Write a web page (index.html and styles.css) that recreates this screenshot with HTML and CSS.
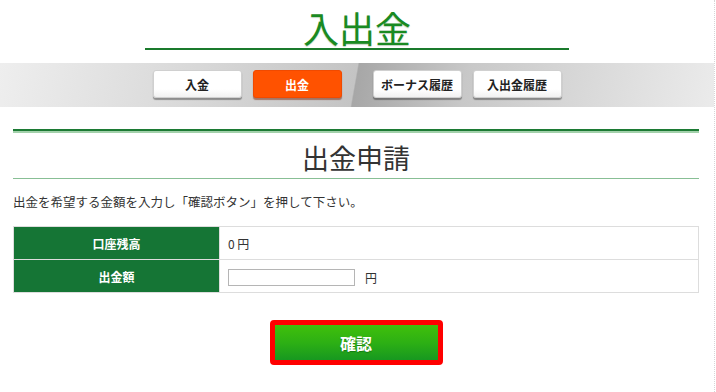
FILE: index.html
```html
<!DOCTYPE html>
<html lang="ja">
<head>
    <meta charset="UTF-8">
    <meta name="viewport" content="width=device-width, initial-scale=1.0">
    <title>入出金</title>
    <link rel="stylesheet" href="styles.css">
</head>
<body>
    <div class="page">
        <header class="page-head">
            <h1>入出金</h1>
        </header>

        <nav class="tab-band">
            <div class="tab-group">
                <a href="#" class="tab">入金</a>
                <a href="#" class="tab active">出金</a>
            </div>
            <div class="tab-group">
                <a href="#" class="tab">ボーナス履歴</a>
                <a href="#" class="tab">入出金履歴</a>
            </div>
        </nav>

        <section class="panel">
            <div class="double-rule"></div>
            <h2>出金申請</h2>
            <p class="lead">出金を希望する金額を入力し「確認ボタン」を押して下さい。</p>

            <table class="form-table">
                <tr>
                    <th>口座残高</th>
                    <td>0&nbsp;円</td>
                </tr>
                <tr>
                    <th>出金額</th>
                    <td><input type="text" class="amount-input"><span class="unit">円</span></td>
                </tr>
            </table>

            <div class="actions">
                <button class="confirm-btn">確認</button>
            </div>
        </section>
    </div>
</body>
</html>
```

FILE: styles.css
```css
* {
    margin: 0;
    padding: 0;
    box-sizing: border-box;
}

body {
    font-family: "Noto Sans CJK JP", "Noto Sans", sans-serif;
    background: #ffffff;
    color: #333333;
}

.page {
    width: 715px;
    min-height: 392px;
    border-right: 1px dotted #d6d6d6;
}

/* page title */
.page-head {
    padding-top: 6px;
}

.page-head h1 {
    width: 424px;
    margin: 0 auto;
    font-size: 36px;
    line-height: 42px;
    font-weight: 400;
    text-align: center;
    color: #198a22;
    border-bottom: 2px solid #1a7a2c;
    text-shadow: 0 1px 1px rgba(0, 80, 0, 0.25);
}

/* tabs */
.tab-band {
    margin-top: 13px;
    height: 44px;
    display: flex;
    justify-content: center;
    align-items: flex-start;
    gap: 31px;
    padding-top: 7px;
    background: linear-gradient(100deg, #eeeeee 0%, #d6d6d6 30%, #c4c4c4 49.6%, #a7a7a7 49.8%, #c8c8c8 65%, #ebebeb 100%);
}

.tab-group {
    display: flex;
    gap: 11px;
}

.tab {
    display: flex;
    align-items: center;
    justify-content: center;
    width: 89px;
    height: 28px;
    background: linear-gradient(#ffffff 0%, #ffffff 70%, #f1f1f1 100%);
    border: 1px solid #d0d0d0;
    border-radius: 3px;
    box-shadow: 0 2px 1px rgba(0, 0, 0, 0.35);
    color: #222222;
    font-size: 12px;
    font-weight: 700;
    text-decoration: none;
}

.tab.active {
    background: #ff5200;
    border-color: #f04a00;
    color: #ffffff;
    box-shadow: 0 2px 1px rgba(120, 30, 0, 0.5);
}

/* main panel */
.panel {
    margin: 22px 15px 0 13px;
}

.double-rule {
    height: 4px;
    border-top: 2px solid #1c7a34;
    border-bottom: 2px solid #a3d1ab;
}

.panel h2 {
    padding-top: 5px;
    font-size: 27px;
    line-height: 40px;
    font-weight: 400;
    text-align: center;
    color: #333333;
    border-bottom: 1px solid #88bf95;
}

.lead {
    margin-top: 13px;
    font-size: 12.5px;
    line-height: 20px;
    color: #333333;
}

.form-table {
    width: 100%;
    margin-top: 14px;
    border-collapse: collapse;
    font-size: 12px;
}

.form-table th,
.form-table td {
    border: 1px solid #dddddd;
    height: 33px;
}

.form-table th {
    width: 206px;
    background: #157535;
    color: #ffffff;
    font-weight: 700;
    text-align: center;
}

.form-table td {
    padding-left: 8px;
    color: #333333;
}

.amount-input {
    width: 127px;
    height: 17px;
    border: 1px solid #b5b5b5;
    vertical-align: middle;
}

.unit {
    margin-left: 10px;
    vertical-align: middle;
}

.actions {
    display: flex;
    justify-content: center;
    margin-top: 27px;
}

.confirm-btn {
    width: 173px;
    height: 45px;
    border: 5px solid #ff0000;
    border-radius: 4px;
    background: linear-gradient(#40c00b 0%, #2db014 50%, #179820 100%);
    color: #ffffff;
    font-family: inherit;
    font-size: 16px;
    font-weight: 700;
    text-shadow: 0 1px 1px rgba(0, 60, 0, 0.4);
    cursor: pointer;
}
```
